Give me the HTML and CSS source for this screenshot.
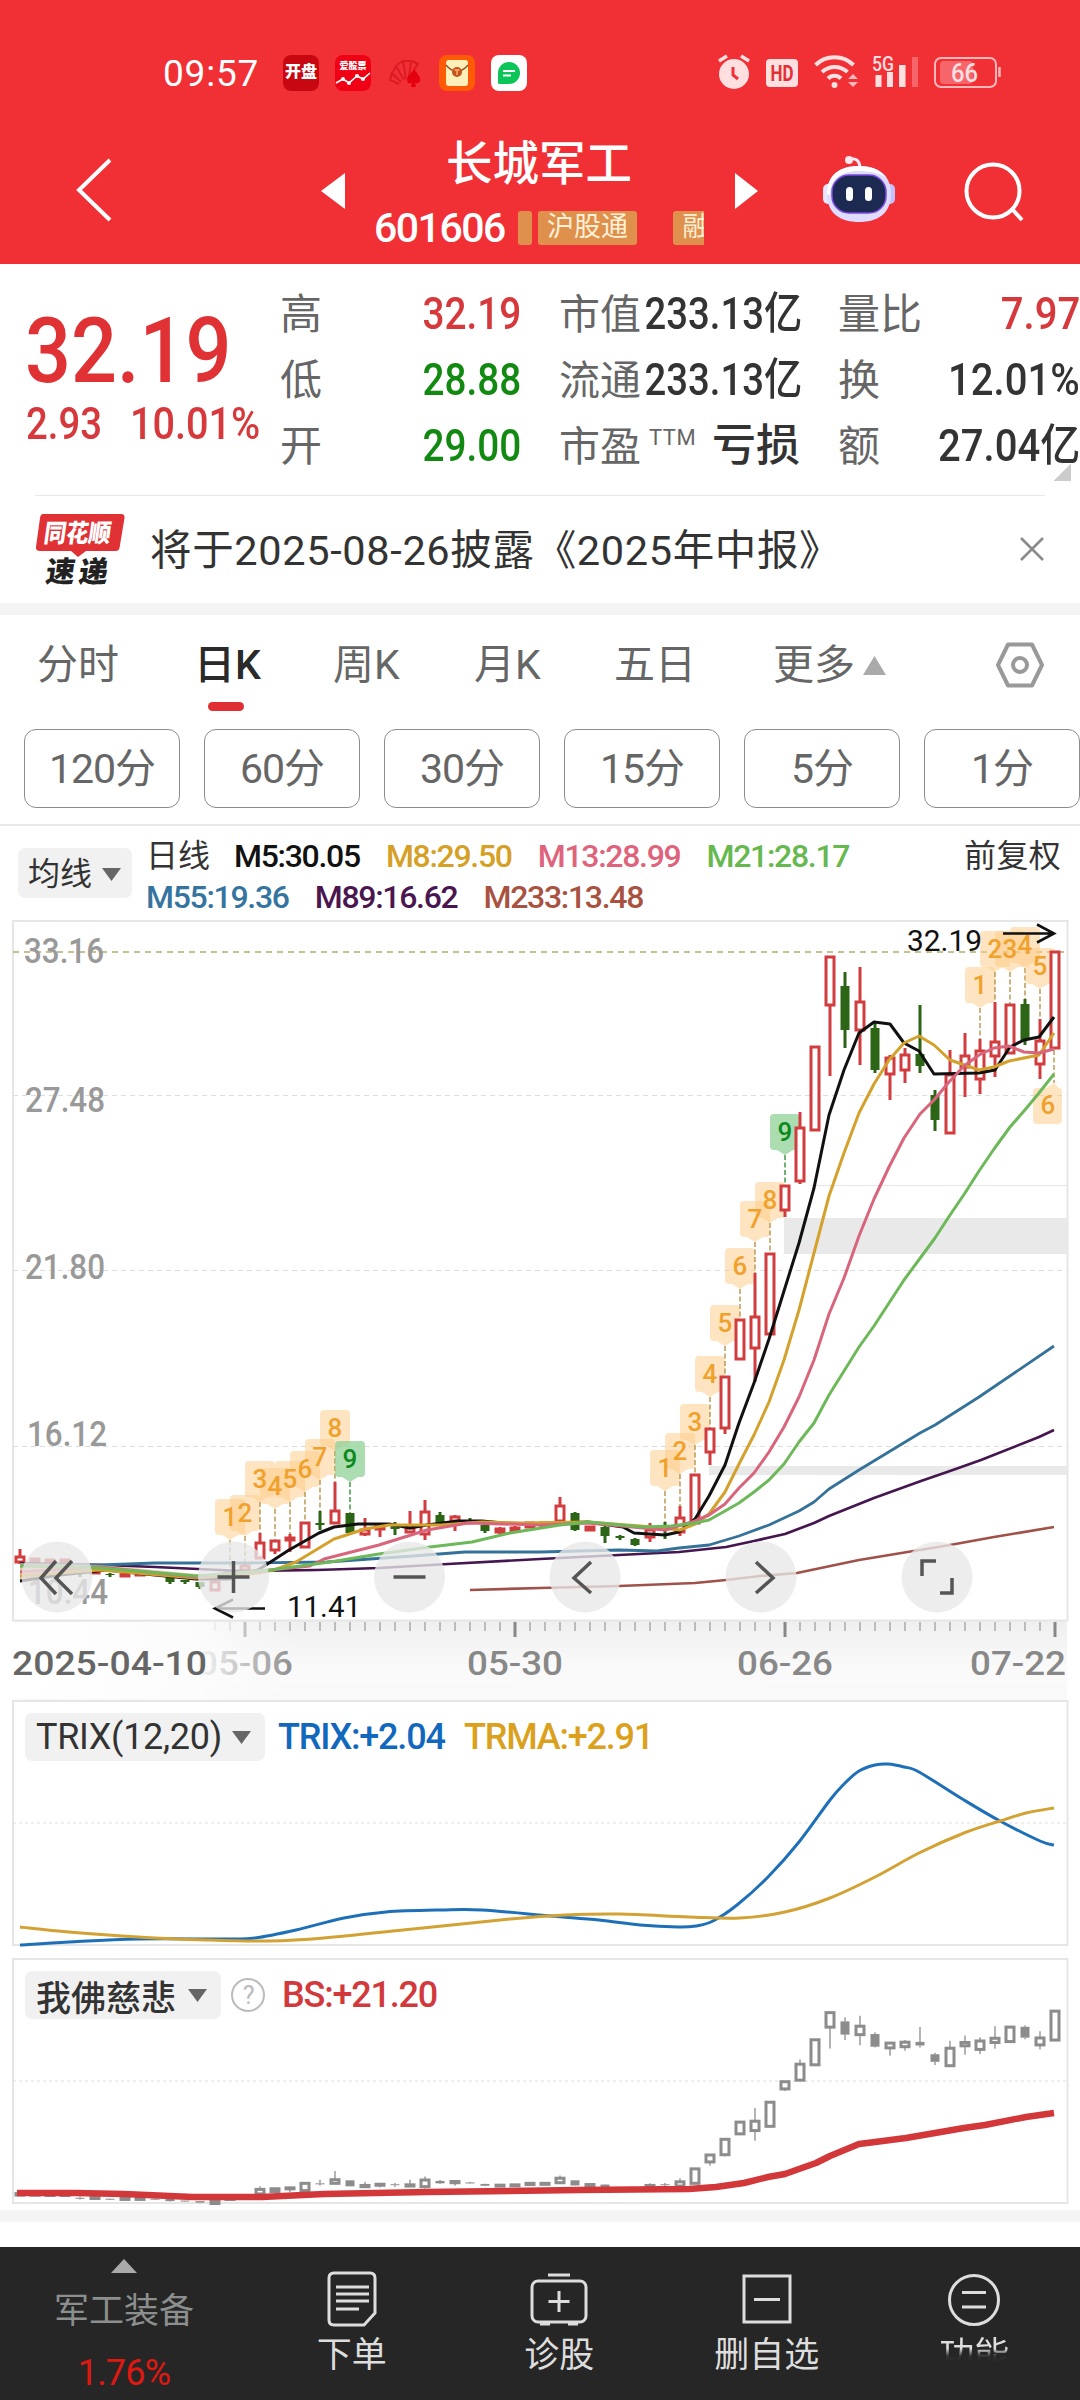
FILE: index.html
```html
<!DOCTYPE html>
<html lang="zh-CN">
<head>
<meta charset="utf-8">
<title>长城军工 601606</title>
<link rel="stylesheet" href="styles.css">
</head>
<body>
<div class="app">
  <header class="header">
    <div class="status">
      <span class="clock">09:57</span>
      <div class="notify">
        <span class="badge badge-kp">开盘</span>
        <span class="badge badge-stock">爱股票
          <svg width="36" height="14" viewBox="0 0 36 14"><path d="M1 11 8 7l6 4 8-7 6 3 7-6" fill="none" stroke="#fff" stroke-width="1.6"/><circle cx="8" cy="7" r="2" fill="#fff"/><circle cx="14" cy="11" r="2" fill="#fff"/><circle cx="22" cy="4" r="2" fill="#fff"/><circle cx="28" cy="7" r="2" fill="#fff"/></svg>
        </span>
        <svg width="36" height="36" viewBox="0 0 36 36"><g fill="none" stroke="#dd1a24" stroke-width="2"><path d="M12 29 3 25l2-7 9 9M6 17l3-6 8 14M10 10l6-4 3 18M17 6h7l-2 16M25 6l6 3-4 6"/></g><path d="M27 14c4 6 7 8 6 12-1 3-4 3-5 1l1 5h-5l1-5c-2 3-5 1-5-2 0-4 4-6 7-11z" fill="#e4000f"/></svg>
        <svg width="36" height="36" viewBox="0 0 36 36"><rect width="36" height="36" rx="8" fill="#ff5a05"/><rect x="7" y="5" width="22" height="26" rx="3" fill="#ffefb8"/><path d="M7 10c4 5 7 6 11 7 4-1 7-2 11-7" fill="none" stroke="#9b4a1c" stroke-width="1.3"/><circle cx="18" cy="17" r="5" fill="#c4541c"/><path d="M15.500 15h5M18 15v5" stroke="#ffb26a" stroke-width="1.4"/></svg>
        <svg width="36" height="36" viewBox="0 0 36 36"><rect width="36" height="36" rx="8" fill="#fff"/><path d="M7 28V18A11 11 0 1 1 18 29H8z" fill="#0cc558"/><path d="M12 16h12M12 20.500h8" stroke="#fff" stroke-width="1.8"/></svg>
      </div>
      <svg class="sysicons" width="290" height="36" viewBox="714 55 290 36">
        <g fill="#ffdfe0">
          <circle cx="734" cy="74" r="15"/><path d="M719 61 727 56M749 61 741 56" stroke="#ffdfe0" stroke-width="3.500"/>
          <path d="M733 67v8l5 4" fill="none" stroke="#f13036" stroke-width="3"/>
          <rect x="766" y="59" width="32" height="28" rx="4"/>
        </g>
        <text x="770.500" y="81" font-size="22" font-weight="700" fill="#e03036" textLength="23" lengthAdjust="spacingAndGlyphs">HD</text>
        <g fill="none" stroke="#ffdfe0" stroke-width="4"><path d="M815.500 65a27 27 0 0 1 38 0M822 72a18.500 18.500 0 0 1 25.500 0M828 78.500a9 9 0 0 1 13 0"/></g>
        <circle cx="834.500" cy="85" r="3" fill="#ffdfe0"/><path d="m848 79 5-5 5 5zM848 82l5 5 5-5z" fill="#ffb8ba"/>
        <text x="872" y="70.500" font-size="20" font-weight="500" fill="#ffdfe0" textLength="22" lengthAdjust="spacingAndGlyphs">5G</text>
        <path d="M875.500 75h6v12h-6zM887 72h6v15h-6zM899 65h6.500v22H899z" fill="#ffdfe0"/><path d="M912 57h6v30h-6z" fill="#f6656a"/>
        <rect x="940" y="61" width="33" height="23" rx="4" fill="#f6656a"/><rect x="935" y="58" width="61" height="29" rx="6" fill="none" stroke="#ffb8ba" stroke-width="2"/><path d="M999.500 67v10" stroke="#ffb8ba" stroke-width="2.500"/>
        <text x="951" y="81.500" font-size="25" font-weight="500" fill="#ffdfe0" textLength="27" lengthAdjust="spacingAndGlyphs">66</text>
      </svg>
    </div>
    <nav class="nav">
      <svg class="back" width="40" height="66" viewBox="0 0 40 66"><path d="M35 3 4 33l31 30" fill="none" stroke="#fff" stroke-width="4"/></svg>
      <svg width="25" height="36" viewBox="0 0 25 36"><path d="M24 0v36L0 18z" fill="#fff"/></svg>
      <div class="title">
        <h1>长城军工</h1>
        <div class="code"><b>601606</b><i class="tag tag-slim"></i><i class="tag">沪股通</i><i class="tag tag-cut">融</i></div>
      </div>
      <svg width="25" height="36" viewBox="0 0 25 36"><path d="M1 0v36l23-18z" fill="#fff"/></svg>
      <svg class="robot" width="74" height="70" viewBox="824 154 74 70">
        <path d="M851 159c7-1 10 1 11 8" fill="none" stroke="#f6e8fa" stroke-width="3"/><circle cx="851" cy="160" r="4" fill="#fbe9ee"/>
        <rect x="825" y="184" width="10" height="20" rx="5" fill="#e6e6ff"/><rect x="887" y="184" width="10" height="20" rx="5" fill="#c5c0fa"/>
        <path d="M829 194c0-20 14-28 32-28s32 8 32 28-14 28-32 28-32-8-32-28z" fill="#dedcff"/>
        <path d="M829 194c0-20 14-28 32-28 12 0 22 4 27 12-6-5-15-7-27-7-18 0-29 8-29 24z" fill="#fff"/>
        <rect x="834" y="175" width="54" height="38" rx="17" fill="#1c2950" stroke="#7a48e0" stroke-width="1.500"/>
        <rect x="848" y="187" width="7" height="14" rx="3.500" fill="#fff"/><rect x="867" y="187" width="7" height="14" rx="3.500" fill="#fff"/>
      </svg>
      <svg class="search" width="60" height="62" viewBox="0 0 60 62"><circle cx="29" cy="31" r="26.500" fill="none" stroke="#fff" stroke-width="4"/><path d="m48 49 10 11" stroke="#fff" stroke-width="4"/></svg>
    </nav>
  </header>

  <section class="quote">
    <div class="price">
      <div class="last"><span class="num">32.19</span></div>
      <div class="change"><span class="num">2.93</span><span class="num">10.01%</span></div>
    </div>
    <dl class="stats">
      <div><dt>高</dt><dd class="up"><span class="num">32.19</span></dd></div>
      <div><dt>低</dt><dd class="down"><span class="num">28.88</span></dd></div>
      <div><dt>开</dt><dd class="down"><span class="num">29.00</span></dd></div>
    </dl>
    <dl class="stats stats-cap">
      <div><dt>市值</dt><dd><span class="num">233.13亿</span></dd></div>
      <div><dt>流通</dt><dd><span class="num">233.13亿</span></dd></div>
      <div><dt>市盈<sup>TTM</sup></dt><dd class="loss">亏损</dd></div>
    </dl>
    <dl class="stats stats-vol">
      <div><dt>量比</dt><dd class="up"><span class="num">7.97</span></dd></div>
      <div><dt>换</dt><dd><span class="num">12.01%</span></dd></div>
      <div><dt>额</dt><dd><span class="num">27.04亿</span></dd></div>
    </dl>
    <i class="corner"></i>
  </section>

  <section class="news">
    <svg width="90" height="74" viewBox="36 512 90 74">
      <path d="M44 513h78q4 0 3.500 4l-5 30q-.6 3-4 3H87l-8 6-7-6H41q-4.500 0-4-4l4-29q.6-4 3-4z" fill="#e03135"/>
      <g font-weight="900" transform="skewX(-8)"><text x="120" y="541" font-size="25" fill="#fff" textLength="67" lengthAdjust="spacingAndGlyphs">同花顺</text><text x="127.500" y="581" font-size="29" fill="#222" textLength="62" lengthAdjust="spacing">速递</text></g>
    </svg>
    <p>将于2025-08-26披露《2025年中报》</p>
    <svg width="24" height="24" viewBox="0 0 24 24"><path d="m1 1 22 22M23 1 1 23" stroke="#8a8a8a" stroke-width="2.500"/></svg>
  </section>
  <div class="band"></div>

  <nav class="tabs">
    <span>分时</span><span class="on">日K</span><span>周K</span><span>月K</span><span>五日</span>
    <span>更多<svg width="23" height="19" viewBox="0 0 23 19"><path d="M11.500 0 23 19H0z" fill="#aaa"/></svg></span>
    <svg class="gear" width="50" height="48" viewBox="0 0 50 48"><path d="M13 3.500h24L47 24 37 44.500H13L3 24z" fill="none" stroke="#999" stroke-width="4" stroke-linejoin="round"/><circle cx="25" cy="24" r="7" fill="none" stroke="#999" stroke-width="4"/></svg>
  </nav>
  <div class="chips"><span>120分</span><span>60分</span><span>30分</span><span>15分</span><span>5分</span><span>1分</span></div>

  <section class="legend">
    <div class="pick">均线<svg width="19" height="13" viewBox="0 0 19 13"><path d="M0 0h19L9.500 13z" fill="#666"/></svg></div>
    <div class="averages">
      <div><span>日线</span><span class="m5">M5:30.05</span><span class="m8">M8:29.50</span><span class="m13">M13:28.99</span><span class="m21">M21:28.17</span></div>
      <div><span class="m55">M55:19.36</span><span class="m89">M89:16.62</span><span class="m233">M233:13.48</span></div>
    </div>
    <span class="adjust">前复权</span>
  </section>
  <svg id="kline" class="chart" width="1080" height="780" viewBox="0 920 1080 780"></svg>
  <section class="panel">
    <svg id="trix" width="1080" height="246" viewBox="0 1700 1080 246"></svg>
    <div class="panelbar"><div class="pick">TRIX(12,20)<svg width="19" height="13" viewBox="0 0 19 13"><path d="M0 0h19L9.500 13z" fill="#666"/></svg></div><span class="trix">TRIX:+2.04</span><span class="trma">TRMA:+2.91</span></div>
  </section>
  <section class="panel panel-bs">
    <svg id="bs" width="1080" height="250" viewBox="0 1958 1080 250"></svg>
    <div class="panelbar"><div class="pick pick-cjk">我佛慈悲<svg width="19" height="13" viewBox="0 0 19 13"><path d="M0 0h19L9.500 13z" fill="#666"/></svg></div><span class="help">?</span><span class="bs">BS:+21.20</span></div>
  </section>
  <div class="band band-low"></div>

  <footer class="toolbar">
    <div class="index"><svg width="26" height="14" viewBox="0 0 26 14"><path d="M13 0 26 14H0z" fill="#aaa"/></svg><span>军工装备</span><b>1.76%</b></div>
    <div><svg width="50" height="56" viewBox="0 0 50 56"><path d="M7 2h36q5 0 5 5v35L37 54H7q-5 0-5-5V7q0-5 5-5z" fill="none" stroke="#ddd" stroke-width="3"/><path d="M9 16h33M9 23h33M9 30h33M9 38h23" stroke="#ddd" stroke-width="3"/></svg><span>下单</span></div>
    <div><svg width="58" height="56" viewBox="0 0 58 56"><rect x="2" y="10" width="54" height="41" rx="6" fill="none" stroke="#ddd" stroke-width="3"/><path d="M18 4h22M29 20v21M18.500 30.500h21M10 53h10M38 53h10" stroke="#ddd" stroke-width="3"/></svg><span>诊股</span></div>
    <div><svg width="50" height="56" viewBox="0 0 50 56"><rect x="2" y="5" width="46" height="46" fill="none" stroke="#ddd" stroke-width="3"/><path d="M12 28.500h26" stroke="#ddd" stroke-width="3"/></svg><span>删自选</span></div>
    <div><svg width="54" height="56" viewBox="0 0 54 56"><circle cx="27" cy="29" r="24.500" fill="none" stroke="#ddd" stroke-width="3"/><path d="M15 21.500h24M15 36h24" stroke="#ddd" stroke-width="3"/></svg><span class="fade">功能</span></div>
  </footer>
</div>
<script src="chart.js"></script>
</body>
</html>
```
FILE: styles.css
```css
* { box-sizing: border-box; margin: 0; padding: 0; }
body { width: 1080px; height: 2400px; overflow: hidden; background: #fff; color: #333; font-family: Roboto, "Noto Sans CJK SC", sans-serif; }
svg { display: block; flex: none; overflow: visible; }
i, b, h1 { font-style: normal; font-weight: inherit; }
.app { display: flex; flex-direction: column; height: 2400px; white-space: nowrap; }

.header { height: 264px; background: #f13036; color: #fff; }
.status { display: flex; align-items: center; height: 146px; padding: 0 76px 0 163px; }
.clock { width: 120px; font-size: 37px; letter-spacing: .8px; }
.notify { display: flex; gap: 16px; }
.badge { display: flex; flex-direction: column; align-items: center; width: 36px; height: 36px; border-radius: 8px; background: #c80810; font-weight: 900; overflow: hidden; }
.badge-kp { font-size: 16px; line-height: 34px; }
.badge-stock { padding-top: 5px; background: #f00014; font-size: 9px; line-height: 12px; }
.sysicons { margin-left: auto; }
.nav { display: flex; align-items: center; height: 118px; padding-left: 75px; }
.nav > svg { margin-top: -28px; }
.nav > .back { margin: -30px 206px 0 0; }
.nav > .title + svg { margin: -28px 63px 0 0; }
.nav > .robot { margin: -32px 68px 0 0; }
.nav > .search { margin-top: -28px; }
.title { width: 388px; height: 118px; }
h1 { margin: -12px 0 0 -2px; font-size: 46.500px; font-weight: 500; line-height: 60px; text-align: center; }
.code { display: flex; align-items: center; width: 330px; height: 36px; margin: 16px 0 0 28px; overflow: hidden; }
.code b { flex: none; width: 144px; font-size: 41px; font-weight: 500; letter-spacing: -1.500px; }
.tag { flex: none; width: 99px; height: 34px; margin-right: 36px; border-radius: 3px; background: #df904c; color: #fff0d8; font-size: 27px; line-height: 33px; text-align: center; }
.tag-slim { width: 14px; margin-right: 6px; }
.tag-cut { width: 46px; margin: 0; }

.quote { position: relative; display: flex; height: 231px; padding-left: 26px; }
.num { display: inline-block; transform: scaleX(.88); transform-origin: right; }
.price { width: 254px; color: #e03135; }
.price .num { transform-origin: left; transform: scaleX(.89); }
.last { height: 120px; padding-top: 33px; margin-left: -1px; font-size: 91px; font-weight: 500; line-height: 108px; }
.change { display: flex; height: 60px; margin-top: 10px; font-size: 44px; font-weight: 500; line-height: 60px; color: #d6383b; }
.change .num:first-child { width: 104px; transform: scaleX(.87); }
.change .num { transform: scaleX(.9); }
.stats { width: 241px; padding-top: 18px; }
.stats div { display: flex; justify-content: space-between; height: 66px; line-height: 66px; font-size: 42px; }
.stats dt { color: #666; }
.stats dd { margin-top: -1px; font-size: 44px; font-weight: 500; }
.stats-cap { margin-left: 38px; }
.stats-cap dt { position: relative; font-size: 41px; }
.stats-cap .num { margin-left: -20px; transform: scaleX(.87); }
.stats-cap sup { position: absolute; left: 90px; top: -9px; font-size: 22px; letter-spacing: .5px; }
.stats-vol { margin-left: 38px; width: 242px; }
.stats-vol .num { transform: scaleX(.91); }
.stats .up { color: #d6383b; }
.stats .down { color: #128a12; }
.corner { position: absolute; right: 9px; top: 200px; width: 17px; height: 17px; background: linear-gradient(135deg, transparent 50%, #ccc 50%); }

.news { display: flex; align-items: center; height: 108px; margin: 0 35px; border-top: 1px solid #e8e8e8; }
.news p { width: 870px; margin: -5px 0 0 25px; font-size: 41.500px; letter-spacing: .65px; }
.news p + svg { margin-top: -2px; }
.band { flex: none; height: 12px; background: #f4f4f4; }

.tabs { display: grid; grid-template-columns: 157px 139px 141px 140px 159px 222px 50px; align-items: center; height: 100px; padding-left: 37px; font-size: 41px; color: #666; }
.tabs span { position: relative; display: flex; align-items: center; gap: 8px; line-height: 60px; }
.tabs .on { color: #2a2a2a; font-weight: 500; }
.tabs .on::after { content: ""; position: absolute; left: 14px; top: 67px; width: 36px; height: 9px; border-radius: 5px; background: #e02f33; }
.chips { display: flex; gap: 24px; height: 111px; padding: 14px 0 0 24px; border-bottom: 2px solid #e8e8e8; }
.chips span { flex: none; width: 156px; height: 79px; border: 1px solid #8c8c8c; border-radius: 12px; font-size: 41px; line-height: 79px; text-align: center; letter-spacing: -1px; color: #666; }

.legend { display: flex; height: 94px; padding-left: 18px; font-size: 32px; line-height: 41px; }
.pick { display: flex; align-items: center; justify-content: space-between; background: #f1f1f1; border-radius: 7px; color: #333; }
.legend .pick { width: 114px; height: 50px; margin: 22px 14px 0 0; padding: 2px 11px 0 10px; }
.averages { width: 818px; padding-top: 10px; }
.averages div { display: flex; gap: 26px; height: 41px; font-weight: 500; letter-spacing: -1.300px; }
.averages div:first-child span:first-child { margin-right: -2px; font-weight: 400; letter-spacing: 0; }
.adjust { padding-top: 10px; letter-spacing: .4px; }
.m5 { color: #111; } .m8 { color: #d6a027; } .m13 { color: #e0637c; } .m21 { color: #66b94f; }
.m55 { color: #35749f; } .m89 { color: #4a1650; } .m233 { color: #a8523f; }

.chart { flex: none; }
.panel { position: relative; flex: none; height: 258px; }
.panel-bs { height: 252px; }
.panelbar { position: absolute; left: 25px; top: 13px; display: flex; align-items: center; height: 48px; font-size: 36px; font-weight: 500; letter-spacing: -1.200px; }
.panelbar .pick { width: 240px; height: 48px; margin-right: 13px; padding: 0 14px 0 11px; font-weight: 400; letter-spacing: -.3px; }
.panelbar .pick-cjk { width: 196px; margin-right: 10px; font-size: 35px; font-weight: 500; letter-spacing: 0; }
.trix { width: 186px; color: #1268bd; }
.trma { color: #dba11d; }
.help { width: 34px; height: 34px; margin-right: 17px; border: 2px solid #bbb; border-radius: 50%; color: #bbb; font-size: 25px; font-weight: 400; line-height: 31px; text-align: center; }
.bs { color: #d2393c; }
.band-low { margin-bottom: 25px; }

.toolbar { display: flex; height: 153px; background: #262626; color: #ddd; font-size: 35px; }
.toolbar > div { display: flex; flex-direction: column; align-items: center; width: 207.500px; padding-top: 24px; line-height: 50px; }
.toolbar > div > span { margin-top: 4px; }
.toolbar > .index { width: 248px; padding: 12px 0 0; }
.toolbar > .index span { margin-top: 14px; color: #8b8f8e; }
.index b { margin-top: 11px; color: #e01812; font-size: 36px; letter-spacing: -.8px; }
.fade { background: linear-gradient(#ddd 35%, #333 50%, transparent 62%); background-clip: text; -webkit-background-clip: text; color: transparent; }
```
FILE: chart.js
```js
const X = i => 20 + 15 * i;
const out = (id, s) => { document.getElementById(id).innerHTML = s; };

// direction, high, body top, body bottom, low
const candles = [
  ['r',1549,1557,1562,1564],['r',1558,1559,1562,1563],['r',1559,1560,1562,1563],['r',1559,1560,1562,1563],['g',1567,1571,1573,1577],
  ['r',1569,1570,1573,1573],['g',1573,1574,1575,1577],['r',1571,1573,1576,1577],['r',1572,1573,1575,1576],['g',1573,1574,1575,1576],
  ['g',1575,1575,1582,1584],['g',1580,1580,1582,1584],['g',1582,1582,1587,1589],['r',1580,1582,1590,1591],['r',1572,1573,1576,1577],
  ['r',1564,1566,1570,1571],['r',1533,1543,1558,1559],['r',1540,1541,1550,1554],['r',1534,1538,1540,1552],['r',1522,1523,1547,1548],
  ['g',1511,1523,1525,1530],['r',1482,1511,1523,1524],['g',1513,1513,1533,1533],['r',1518,1530,1534,1536],['r',1525,1526,1529,1537],
  ['g',1522,1526,1529,1535],['r',1511,1528,1532,1533],['r',1500,1512,1534,1540],['g',1512,1515,1523,1525],['r',1515,1517,1521,1531],
  ['g',1518,1520,1523,1524],['g',1524,1525,1531,1533],['r',1527,1529,1532,1534],['r',1526,1528,1531,1532],['r',1522,1523,1527,1528],
  ['r',1522,1523,1526,1527],['r',1497,1506,1521,1522],['g',1512,1513,1530,1531],['r',1526,1527,1530,1530],['g',1526,1527,1536,1543],
  ['g',1535,1536,1538,1540],['g',1538,1539,1545,1546],['r',1523,1530,1537,1542],['g',1522,1526,1528,1539],['r',1506,1518,1532,1536],
  ['r',1474,1475,1523,1524],['r',1428,1429,1452,1465],['r',1376,1377,1428,1434],['r',1319,1320,1359,1360],['r',1273,1317,1348,1382],
  ['r',1253,1254,1334,1335],['r',1185,1186,1210,1217],['r',1112,1128,1181,1184],['r',1046,1047,1130,1131],['r',956,957,1005,1076],
  ['g',972,986,1030,1048],['r',967,1002,1030,1065],['g',1022,1028,1070,1073],['r',1055,1058,1074,1100],['r',1048,1055,1070,1083],
  ['g',1005,1054,1066,1073],['g',1090,1095,1120,1131],['r',1050,1075,1133,1134],['r',1033,1056,1067,1097],['r',1039,1051,1079,1094],
  ['r',1002,1042,1056,1077],['r',1004,1005,1053,1054],['g',999,1004,1040,1045],['r',1019,1041,1064,1079],['r',951,952,1048,1049],
];
const drawCandles = (map, red, green, w) => candles.map(([d, h, t, b, l], i) => {
  const x = X(i), c = d === 'r' ? red : green;
  const [H, T, B, L] = [h, t, b, l].map(map);
  const hh = Math.max(B - T, 1);
  return `<path d="M${x} ${H}V${T}M${x} ${B}V${L}" stroke="${c}" stroke-width="${w}"/>` +
    (d === 'r' ? `<rect x="${x - 4}" y="${T}" width="8" height="${hh}" fill="#fff" stroke="${c}" stroke-width="3"/>`
               : `<rect x="${x - 4.500}" y="${T}" width="9" height="${hh}" fill="${c}"/>`);
}).join('');
const line = (pts, c, w = 3) => `<polyline points="${pts}" fill="none" stroke="${c}" stroke-width="${w}" stroke-linejoin="round"/>`;
// Catmull-Rom spline through the points
const curve = (s, c, w) => {
  const p = s.split(' ').map(a => a.split(',').map(Number));
  let d = `M${p[0]}`;
  for (let i = 0; i < p.length - 1; i++) {
    const a = p[i - 1] || p[i], b = p[i], e = p[i + 1], f = p[i + 2] || e;
    d += `C${b[0] + (e[0] - a[0]) / 6} ${b[1] + (e[1] - a[1]) / 6} ${e[0] - (f[0] - b[0]) / 6} ${e[1] - (f[1] - b[1]) / 6} ${e}`;
  }
  return `<path d="${d}" fill="none" stroke="${c}" stroke-width="${w}"/>`;
};
const text = (x, y, s, len, size, fill, extra = '') =>
  `<text x="${x}" y="${y}" font-size="${size}" fill="${fill}" textLength="${len}" lengthAdjust="spacingAndGlyphs" ${extra}>${s}</text>`;

let k = `<defs><linearGradient id="axis" x2="0" y2="1"><stop stop-color="#efefef"/><stop offset=".6" stop-color="#fafafa"/><stop offset="1" stop-color="#f9f9f9"/></linearGradient>
<linearGradient id="veil"><stop stop-color="#fff"/><stop offset=".66" stop-color="#fcfcfc" stop-opacity=".92"/><stop offset="1" stop-color="#fafafa" stop-opacity="0"/></linearGradient></defs>`;
k += `<rect x="13" y="1621" width="1054" height="79" fill="url(#axis)"/>`;
k += `<rect x="13" y="921" width="1054.500" height="699.500" fill="none" stroke="#e6e6e6" stroke-width="2"/>`;
k += `<rect x="784" y="1218" width="283" height="36" fill="#e9e9e9"/><rect x="709" y="1466" width="358" height="9" fill="#e9e9e9"/><path d="M810 1185.500H1067" stroke="#e6e6e6"/>`;
k += `<path d="M13 952H1067" stroke="#b5ad6c" stroke-width="1.500" stroke-dasharray="6 5"/>`;
k += `<path d="M13 1095.500H1067M13 1270.500H1067M13 1446.500H1067" stroke="#ddd" stroke-dasharray="5 4"/>`;
[['33.16',963,24],['27.48',1112,25],['21.80',1279,25],['16.12',1446,27],['10.44',1604,28]].forEach(([s, y, x]) => k += text(x, y, s, 80, 35, '#999', 'font-weight="500"'));

const marks = [[14,1499,1],[15,1495,2],[16,1461,3],[17,1468,4],[18,1461,5],[19,1451,6],[20,1439,7],[21,1410,8],[22,1441,9],
  [43,1450,1],[44,1433,2],[45,1404,3],[46,1356,4],[47,1305,5],[48,1248,6],[49,1201,7],[50,1182,8],[51,1114,9],
  [64,967,1],[65,931,2],[66,931,3],[67,927,4],[68,948,5]];
let nums = '';
marks.forEach(([i, y, n]) => {
  const x = X(i), g = n === 9;
  k += `<path d="M${x} ${y + 41}V${candles[i][1]}" stroke="${g ? '#258a2c' : '#b08c3c'}" stroke-width="1.300" stroke-dasharray="5 2.500"/>`;
  k += `<path d="M${x - 11} ${y}h22q4 0 4 4v28q0 4-4 4h-3L${x} ${y + 41}l-8-5h-3q-4 0-4-4v-28q0-4 4-4z" fill="${g ? '#90d196' : '#fdc983'}" opacity="${g ? .75 : .5}"/>`;
  nums += `<text x="${x}" y="${y + 27}" font-size="26" font-weight="500" text-anchor="middle" fill="${g ? '#0c8a1c' : '#f0a12c'}">${n}</text>`;
});
k += `<path d="M1054 1050V1083" stroke="#b08c3c" stroke-width="1.300" stroke-dasharray="5 2.500"/><path d="M1037 1088h9l8-5 5 5q3 0 3 4v28q0 4-4 4h-21q-4 0-4-4v-28q0-4 4-4z" fill="#fdc983" opacity=".5"/>`;
nums += `<text x="1048" y="1114" font-size="26" font-weight="500" text-anchor="middle" fill="#f0a12c">6</text>`;
k += drawCandles(v => v, '#d13d3f', '#2d6516', 3);
k += nums;

k += line('470,1590 540,1588 619,1586 695,1583 726,1580 760,1576 797,1573 859,1560 950,1545 994,1537 1054,1527', '#a0524a', 2.7);
k += line('20,1563 103,1565 155,1567 241,1571 317,1570 379,1568 448,1564 540,1559 619,1555 679,1552 726,1547 754,1541 785,1534 814,1523 829,1516 874,1498 921,1481 950,1471 981,1460 1039,1437 1054,1430', '#45164f', 2.7);
k += line('20,1565 100,1565 155,1563 241,1563 327,1562 413,1556 465,1552 540,1552 619,1550 657,1551 679,1548 709,1545 739,1536 769,1525 799,1511 814,1502 829,1489 859,1470 920,1433 935,1425 979,1397 1054,1346', '#357299', 2.8);
k += `<path d="M20 1563 100 1565 196 1574 235 1574 196 1579 100 1570 20 1580z" fill="#d8b27c" opacity=".75"/>`;
k += line('20,1581 60,1575 107,1570 155,1575 196,1579 229,1579 258,1570 269,1563 289,1550 319,1533 334,1527 358,1524 389,1524 410,1528 427,1525 458,1521 482,1521 503,1523 540,1524 588,1522 623,1527 634,1533 665,1535 679,1532 695,1519 709,1496 725,1465 739,1423 754,1383 769,1339 784,1291 799,1243 814,1188 829,1115 844,1070 859,1033 874,1022 890,1024 904,1043 919,1051 934,1074 979,1073 995,1070 1010,1047 1024,1040 1039,1037 1054,1017', '#111');
k += line('20,1576 100,1570 196,1578 258,1573 274,1570 296,1562 334,1539 365,1529 389,1525 441,1525 482,1522 523,1523 588,1522 640,1526 680,1530 695,1524 709,1514 725,1492 739,1464 754,1435 769,1402 784,1360 799,1310 814,1253 829,1196 844,1153 859,1113 874,1084 889,1060 904,1043 919,1036 934,1045 950,1060 979,1070 994,1067 1009,1061 1039,1055 1054,1033', '#d3a12c');
k += line('20,1572 100,1567 196,1577 270,1570 310,1566 324,1559 379,1545 427,1530 468,1523 540,1525 588,1523 665,1530 695,1521 709,1515 725,1504 739,1488 754,1473 769,1452 784,1427 799,1397 814,1360 829,1314 844,1278 859,1236 874,1199 889,1167 904,1138 920,1114 934,1100 949,1082 964,1066 979,1055 994,1048 1009,1046 1024,1052 1039,1053 1054,1049', '#d9657c');
k += line('20,1566 100,1568 196,1576 270,1570 330,1562 379,1554 430,1547 472,1542 510,1533 560,1525 589,1522 643,1527 671,1526 695,1523 709,1520 725,1511 739,1503 754,1492 769,1480 784,1464 799,1442 814,1423 829,1395 844,1371 859,1347 874,1326 889,1303 904,1280 921,1257 935,1238 950,1215 965,1193 979,1171 994,1149 1010,1127 1024,1111 1039,1093 1054,1074', '#6db959');

k += text(907, 951, '32.19', 75, 29, '#111') + text(287, 1617, '11.41', 74, 29, '#111');
k += `<path d="M1003 933.500H1053M1037 924.500 1054 933.500 1037 942.500" fill="none" stroke="#111" stroke-width="2.600"/>`;
k += `<path d="M265 1608.500H216M233 1599.500 215 1608.500 233 1617.500" fill="none" stroke="#111" stroke-width="2.600"/>`;

for (let i = 13; i < 70; i++) {
  const major = [15, 33, 51, 69].includes(i);
  k += `<path d="M${X(i)} 1622V${major ? 1637 : 1631}" stroke="${major ? '#888' : '#bbb'}" stroke-width="${major ? 3 : 2}"/>`;
}
[[197,'05-06'],[467,'05-30'],[737,'06-26'],[970,'07-22']].forEach(([x, s]) => k += text(x, 1675, s, 96, 34, '#888', 'font-weight="500"'));
k += `<rect x="8" y="1622" width="292" height="77" fill="url(#veil)"/>` + text(12, 1675, '2025-04-10', 195, 34, '#666', 'font-weight="500"');

const glyphs = ['M-1-16-16 1-1 17M15-16-1 1 15 17', 'M0-16V16M-16 0H16', 'M-16 0H16', 'M6-15-11 1 6 16', 'M-5-15 12 1-5 16', 'M-15-1V-16H-1M15 1V16H3'];
[57,233.5,409.5,585,761,937].forEach((x, i) => {
  k += `<circle cx="${x}" cy="1577" r="35.500" fill="#e8e8e8" opacity=".78"/><path d="${glyphs[i]}" transform="translate(${x} 1577)" fill="none" stroke="#555" stroke-width="3.500"/>`;
});
out('kline', k);

out('trix', `<rect x="13" y="1701" width="1054.500" height="244" fill="#fff" stroke="#e6e6e6" stroke-width="2"/><path d="M13 1823H1067" stroke="#ddd" stroke-dasharray="3 3"/>`
  + curve('20,1945 69,1942 138,1939 227,1939 255,1938 296,1930 344,1918 386,1912 441,1910 482,1910 551,1916 599,1920 640,1925 678,1927 696,1926 713,1921 737,1905 768,1877 799,1842 830,1800 844,1784 859,1771 875,1765 888,1764 904,1767 919,1772 964,1800 1000,1821 1040,1841 1054,1845', '#1d6fb8', 3)
  + curve('20,1927 69,1932 138,1937 207,1940 269,1941 324,1938 413,1929 510,1919 565,1915 620,1914 689,1917 740,1918 785,1912 830,1898 875,1877 919,1853 964,1833 1000,1821 1026,1813 1054,1808', '#d2a234', 3));

out('bs', `<rect x="13" y="1959" width="1054.500" height="244" fill="#fff" stroke="#e6e6e6" stroke-width="2"/><path d="M13 2081H1067" stroke="#ddd" stroke-dasharray="3 3"/>`
  + drawCandles(v => v * .3016 + 1724, '#8c8c8c', '#8c8c8c', 1.3)
  + line('17,2193 76,2193 124,2194 193,2197 262,2197 324,2194 427,2192 579,2190 689,2189 716,2187 744,2183 768,2177 785,2174 799,2169 816,2163 830,2156 859,2144 875,2142 906,2138 964,2128 985,2125 1026,2117 1054,2113', '#d2373a', 6.5));
```
